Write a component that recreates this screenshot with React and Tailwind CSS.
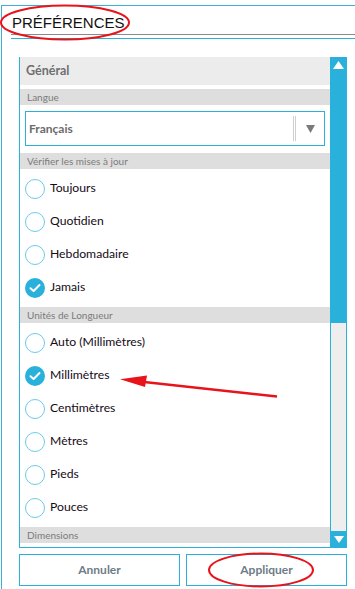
import React from "react";

const Radio = ({ label, checked }) => (
  <div className="h-[33px] flex items-center pl-[5px]">
    {checked ? (
      <div className="w-[20px] h-[20px] rounded-full bg-[#29b1dc] flex items-center justify-center">
        <svg width="12" height="10" viewBox="0 0 12 10">
          <path d="M1.5 5.2 L4.6 8 L10.5 2" fill="none" stroke="white" strokeWidth="2" strokeLinecap="round" strokeLinejoin="round" />
        </svg>
      </div>
    ) : (
      <div className="w-[20px] h-[20px] rounded-full border-[1.5px] border-[#6ccaea] bg-white" />
    )}
    <span className="ml-[5px] text-[12.2px] text-[#150a15]">{label}</span>
  </div>
);

const Section = ({ children }) => (
  <div className="h-[16px] bg-[#dedede] flex items-center pl-[7px] text-[10px] text-[#7b7b7b] leading-none">
    {children}
  </div>
);

export default function App() {
  return (
    <div className="relative w-[355px] h-[589px] bg-white overflow-hidden" style={{ fontFamily: "Lato, 'Noto Sans', sans-serif" }}>
      <div className="mt-[5px] ml-[1px] h-[584px] border-t border-l border-[#3ab0d8] flex flex-col">
        {/* Title */}
        <div className="ml-[9px] pt-[5px]">
          <div className="border-b border-[#8a8a8a] h-[24px] pt-[3px] pl-[1px]">
            <div className="text-[15px] text-[#111] leading-[17px]" style={{ fontFamily: "'Liberation Sans', Arial, sans-serif" }}>PRÉFÉRENCES</div>
          </div>
          <div className="mt-[3px] border-b border-[#29b1dc]" />
        </div>

        {/* Panel */}
        <div className="mt-[18px] ml-[17px] w-[328px] h-[491px] border-l border-b border-[#29b1dc] flex">
          <div className="flex-1 flex flex-col overflow-hidden">
            <div className="h-[28px] shrink-0 bg-[#ececec] flex items-center pl-[6px] text-[12.5px] font-bold text-[#6f6f6f]">Général</div>
            <div className="h-[4px] shrink-0" />
            <Section>Langue</Section>
            <div className="pt-[6px] pb-[7px] pl-[5px] pr-[5px]">
              <div className="h-[35px] border border-[#29b1dc] flex items-center">
                <span className="flex-1 pl-[3px] text-[12px] font-bold text-[#6c6c6c]">Français</span>
                <div className="h-[25px] w-[3px] border-l border-r border-[#cfcfcf]" />
                <div className="w-[28px] flex justify-center">
                  <svg width="9" height="8" viewBox="0 0 9 8"><path d="M0 0 H9 L4.5 8 Z" fill="#7a7a7a" /></svg>
                </div>
              </div>
            </div>
            <Section>Vérifier les mises à jour</Section>
            <div className="pt-[3px] pb-[3px]">
              <Radio label="Toujours" />
              <Radio label="Quotidien" />
              <Radio label="Hebdomadaire" />
              <Radio label="Jamais" checked />
            </div>
            <Section>Unités de Longueur</Section>
            <div className="pt-[3px] pb-[3px]">
              <Radio label="Auto (Millimètres)" />
              <Radio label="Millimètres" checked />
              <Radio label="Centimètres" />
              <Radio label="Mètres" />
              <Radio label="Pieds" />
              <Radio label="Pouces" />
            </div>
            <Section>Dimensions</Section>
          </div>
          {/* Scrollbar */}
          <div className="w-[17px] flex flex-col">
            <div className="h-[266px] bg-[#29b1dc] flex justify-center pt-[4px]">
              <svg width="11" height="8" viewBox="0 0 11 8"><path d="M5.5 0 L11 8 H0 Z" fill="white" /></svg>
            </div>
            <div className="flex-1 bg-[#eeeeee] border-l border-r border-[#29b1dc]" />
            <div className="h-[16px] bg-[#29b1dc] flex justify-center items-start pt-[5px]">
              <svg width="10" height="7" viewBox="0 0 10 7"><path d="M0 0 H10 L5 7 Z" fill="white" /></svg>
            </div>
          </div>
        </div>

        {/* Buttons */}
        <div className="mt-[6px] ml-[17px] flex gap-[6px] w-[328px]">
          <button className="w-[161px] h-[32px] border border-[#29b1dc] text-[12px] font-bold text-[#6e7c87] bg-white">Annuler</button>
          <button className="flex-1 h-[32px] border border-[#29b1dc] text-[12px] font-bold text-[#6e7c87] bg-white">Appliquer</button>
        </div>
      </div>

      {/* Annotations */}
      <svg className="absolute inset-0 pointer-events-none" width="355" height="589" viewBox="0 0 355 589">
        <ellipse cx="65" cy="22.5" rx="64" ry="17" fill="none" stroke="#e8141c" strokeWidth="2" />
        <ellipse cx="261" cy="570" rx="52" ry="16.5" fill="none" stroke="#e8141c" strokeWidth="2" />
        <line x1="277" y1="396.5" x2="135" y2="381" stroke="#e8141c" strokeWidth="2.5" />
        <path d="M120 379.3 L147 375.5 L145 387 Z" fill="#e8141c" />
      </svg>
    </div>
  );
}
